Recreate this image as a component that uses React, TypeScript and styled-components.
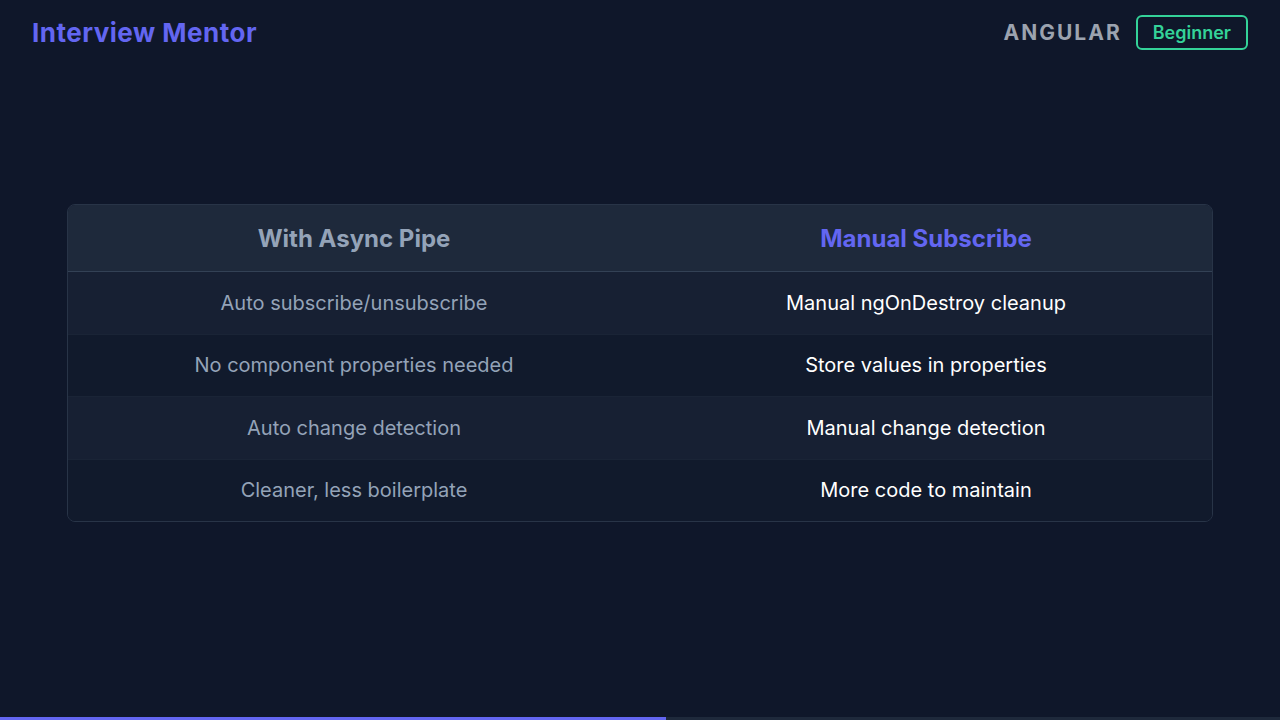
import React from "react";
import styled, { createGlobalStyle } from "styled-components";

const Global = createGlobalStyle`
  html, body { margin: 0; padding: 0; background: #0f172a; }
  body { font-family: Inter, "Noto Sans", sans-serif; }
`;

const Page = styled.div`
  width: 1280px; height: 720px; position: relative; overflow: hidden;
  display: flex; flex-direction: column; background: #0f172a;
`;
const Header = styled.header`
  display: flex; justify-content: space-between; align-items: center;
  padding: 14px 32px 0 32px; height: 36px;
`;
const Title = styled.h1`
  margin: 0; font-size: 26px; font-weight: 700; color: #6366f1; letter-spacing: 0.5px;
`;
const Right = styled.div`display: flex; align-items: center; gap: 14px;`;
const Tech = styled.span`
  font-size: 21px; font-weight: 700; color: #9ca3af; letter-spacing: 2px;
`;
const Badge = styled.span`
  border: 2px solid #34d399; color: #34d399; border-radius: 6px;
  font-size: 18px; font-weight: 600; padding: 5px 15px; line-height: 21px;
`;
const Main = styled.main`flex: 1; padding: 154px 67px 0 67px;`;
const Table = styled.div`
  border: 1px solid #283447; border-radius: 8px; overflow: hidden;
  background: rgba(30,41,59,0.4);
`;
const Row = styled.div<{ $head?: boolean; $alt?: boolean }>`
  display: grid; grid-template-columns: 1fr 1fr; align-items: center;
  height: ${p => (p.$head ? 66 : 61.5)}px;
  background: ${p => (p.$head ? "#1e293b" : p.$alt ? "#172033" : "#111a2c")};
  border-bottom: ${p => (p.$head ? "1px solid #334155" : "1px solid #1a2436")};
  &:last-child { border-bottom: none; }
`;
const Cell = styled.div<{ $head?: boolean; $accent?: boolean; $bright?: boolean }>`
  text-align: center;
  font-size: ${p => (p.$head ? 24 : 20)}px;
  font-weight: ${p => (p.$head ? 700 : 400)};
  color: ${p => (p.$accent ? "#6366f1" : p.$head ? "#94a3b8" : p.$bright ? "#ffffff" : "#94a3b8")};
`;
const Track = styled.div`position: absolute; left: 0; right: 0; bottom: 0; height: 3px; background: #1e293b;`;
const Fill = styled.div`height: 100%; background: #6366f1;`;

const rows = [
  ["Auto subscribe/unsubscribe", "Manual ngOnDestroy cleanup"],
  ["No component properties needed", "Store values in properties"],
  ["Auto change detection", "Manual change detection"],
  ["Cleaner, less boilerplate", "More code to maintain"],
];

export default function App() {
  return (
    <Page>
      <Global />
      <Header>
        <Title>Interview Mentor</Title>
        <Right>
          <Tech>ANGULAR</Tech>
          <Badge>Beginner</Badge>
        </Right>
      </Header>
      <Main>
        <Table>
          <Row $head>
            <Cell $head>With Async Pipe</Cell>
            <Cell $head $accent>Manual Subscribe</Cell>
          </Row>
          {rows.map((r, i) => (
            <Row key={i} $alt={i % 2 === 0}>
              <Cell>{r[0]}</Cell>
              <Cell $bright>{r[1]}</Cell>
            </Row>
          ))}
        </Table>
      </Main>
      <Track><Fill style={{ width: "52%" }} /></Track>
    </Page>
  );
}
